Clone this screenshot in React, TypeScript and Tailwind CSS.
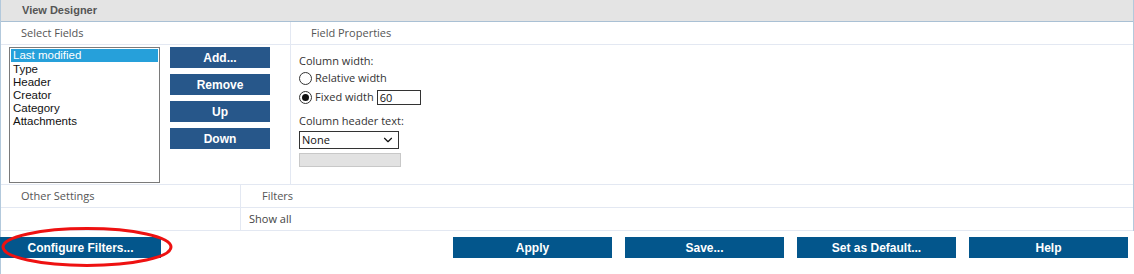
import { ChevronDown } from "lucide-react";

const fields = ["Last modified", "Type", "Header", "Creator", "Category", "Attachments"];
const sideButtons = ["Add...", "Remove", "Up", "Down"];
const footButtons = ["Apply", "Save...", "Set as Default...", "Help"];

const Radio = ({ checked, label }: { checked?: boolean; label: string }) => (
  <div className="flex items-center gap-[3px] h-[19px]">
    <span className="w-[13px] h-[13px] rounded-full border border-[#333] bg-white flex items-center justify-center">
      {checked && <span className="w-[7px] h-[7px] rounded-full bg-[#111]" />}
    </span>
    <span>{label}</span>
  </div>
);

const btn = "text-white font-bold flex items-center justify-center text-[12px] font-['Liberation_Sans','DejaVu_Sans',sans-serif]";

export default function App() {
  return (
    <div className="relative w-[1134px] h-[274px] bg-white text-[11px] text-[#222] font-['Open_Sans','Noto_Sans',sans-serif]">
      <div className="border-l border-r border-[#b3c9dc]">
        {/* header */}
        <div className="h-[22px] bg-[#e4e4e4] border-b border-[#a9c0d4] pl-[21px] flex items-center font-bold text-[#555] text-[11px] font-['Liberation_Sans',sans-serif]">
          View Designer
        </div>

        {/* select fields / field properties */}
        <div className="grid grid-cols-[290px_1fr] h-[23px] border-b border-[#e3e8f2] text-[#555]">
          <div className="pl-[20px] flex items-center border-r border-[#e3e8f2]">Select Fields</div>
          <div className="pl-[20px] flex items-center">Field Properties</div>
        </div>

        <div className="grid grid-cols-[290px_1fr] h-[140px] border-b border-[#e3e8f2]">
          <div className="border-r border-[#e3e8f2] flex pl-[8px] pt-[2px] gap-[10px]">
            <div className="w-[151px] h-[136px] border border-[#7a7a7a] leading-[13px] pt-[1px] font-['Liberation_Sans',sans-serif] text-[11.5px] text-[#111]">
              {fields.map((f, i) => (
                <div key={f} className={i === 0 ? "bg-[#26a0da] text-white px-[2px] h-[13px] mx-[1px] mb-[1px]" : "px-[2px] mx-[1px]"}>
                  {f}
                </div>
              ))}
            </div>
            <div className="flex flex-col gap-[6px]">
              {sideButtons.map((b) => (
                <div key={b} className={`w-[100px] h-[21px] bg-[#27578a] ${btn}`}>
                  {b}
                </div>
              ))}
            </div>
          </div>
          <div className="pl-[8px] pt-[8px] text-[#333]">
            <div className="h-[16px] flex items-center">Column width:</div>
            <Radio label="Relative width" />
            <div className="flex items-center gap-[3px]">
              <Radio checked label="Fixed width" />
              <div className="w-[44px] h-[15px] border border-[#333] text-[#111] flex items-center pl-[2px] leading-none">60</div>
            </div>
            <div className="h-[16px] flex items-center mt-[6px]">Column header text:</div>
            <div className="mt-[2px] w-[100px] h-[18px] border border-[#333] flex items-center justify-between pl-[2px] pr-[3px] text-[#111]">
              <span>None</span>
              <ChevronDown size={14} strokeWidth={2} />
            </div>
            <div className="mt-[4px] w-[102px] h-[14px] border border-[#c8c8c8] bg-[#e2e2e2]" />
          </div>
        </div>

        {/* other settings / filters */}
        <div className="grid grid-cols-[240px_1fr] h-[23px] border-b border-[#e3e8f2] text-[#555]">
          <div className="pl-[20px] flex items-center border-r border-[#e3e8f2]">Other Settings</div>
          <div className="pl-[21px] flex items-center">Filters</div>
        </div>
        <div className="grid grid-cols-[240px_1fr] h-[23px] border-b border-[#e3e8f2] text-[#444]">
          <div className="border-r border-[#e3e8f2]" />
          <div className="pl-[8px] flex items-center">Show all</div>
        </div>
      </div>

      {/* footer buttons */}
      <div className="flex pt-[6px] border-l border-[#b3c9dc] h-[43px]">
        <div className={`w-[161px] h-[21px] bg-[#03568c] -ml-px ${btn}`}>
          Configure Filters...
        </div>
        <div className="ml-auto flex gap-[13px] pr-[6px]">
          {footButtons.map((b) => (
            <div key={b} className={`w-[159px] h-[21px] bg-[#03568c] ${btn}`}>
              {b}
            </div>
          ))}
        </div>
      </div>

      {/* red highlight */}
      <svg className="absolute left-0 top-[226px] pointer-events-none" width="178" height="44">
        <ellipse cx="87" cy="21" rx="84" ry="18.5" fill="none" stroke="#ee1111" strokeWidth="3" />
      </svg>
    </div>
  );
}
